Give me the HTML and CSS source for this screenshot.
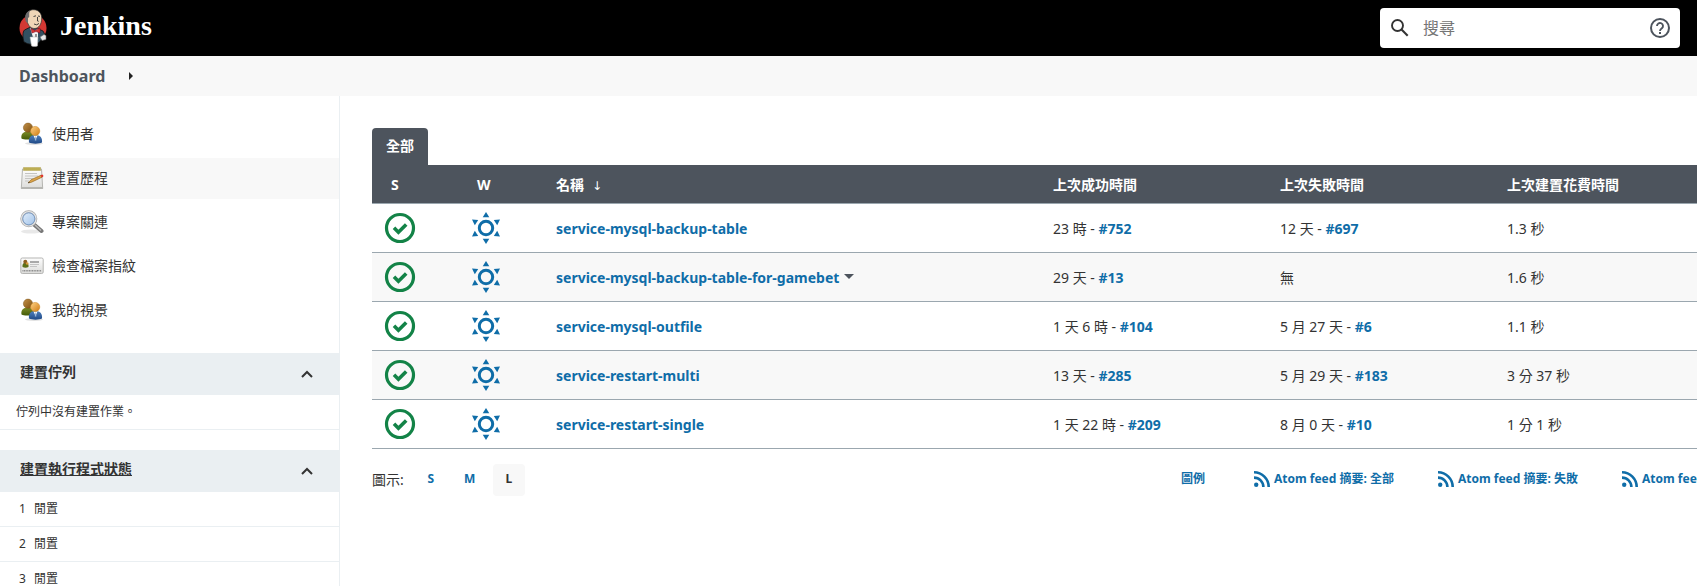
FILE: index.html
```html
<!DOCTYPE html>
<html lang="zh-Hant">
<head>
<meta charset="utf-8">
<title>Dashboard [Jenkins]</title>
<link rel="stylesheet" href="styles.css">
</head>
<body>
<svg class="defs" width="0" height="0" aria-hidden="true">
  <defs>
    <linearGradient id="gBrown" x1="0" y1="0" x2="1" y2="1"><stop offset="0" stop-color="#c39048"/><stop offset="1" stop-color="#7d4f10"/></linearGradient>
    <linearGradient id="gOrange" x1="0" y1="0" x2="1" y2="1"><stop offset="0" stop-color="#ffd489"/><stop offset="1" stop-color="#d07a10"/></linearGradient>
    <linearGradient id="gGreen" x1="0" y1="0" x2="0" y2="1"><stop offset="0" stop-color="#7d8c28"/><stop offset="1" stop-color="#435a06"/></linearGradient>
    <linearGradient id="gBlue" x1="0" y1="0" x2="0" y2="1"><stop offset="0" stop-color="#4f80bd"/><stop offset="1" stop-color="#204a87"/></linearGradient>
    <linearGradient id="gPaper" x1="0" y1="0" x2="0" y2="1"><stop offset="0" stop-color="#fdfdfd"/><stop offset="1" stop-color="#dcdcda"/></linearGradient>
    <linearGradient id="gLens" x1="0" y1="0" x2="1" y2="1"><stop offset="0" stop-color="#e6f1fc"/><stop offset="1" stop-color="#9dc0e8"/></linearGradient>
  </defs>
  <symbol id="people" viewBox="0 0 24 24">
    <ellipse cx="14" cy="21.500" rx="9" ry="1.500" fill="#000" opacity=".12"/>
    <path d="M1.500 16.500c-.8-4 1.500-7 6-7s6.500 2.500 6.500 6.500c-3 2-10 2-12.500.5z" fill="url(#gGreen)"/>
    <circle cx="8" cy="5.700" r="4.600" fill="url(#gBrown)" stroke="#7d5316" stroke-width=".5"/>
    <path d="M9 20.500c-.7-5 1.500-7.500 6.500-7.500s7 3 6.500 7.500c-3 1.500-10 1.500-13 0z" fill="url(#gBlue)"/>
    <path d="M13.500 13.500h4l-2 4.500z" fill="#fff"/><path d="M15.200 14.500h.8l.4 4h-1.600z" fill="#9db8d8"/>
    <circle cx="15.200" cy="9" r="4.600" fill="url(#gOrange)" stroke="#c9801c" stroke-width=".5"/>
  </symbol>
  <symbol id="notepad" viewBox="0 0 24 24">
    <path d="M2.500 3h19l1.200 19.500h-21.400z" fill="url(#gPaper)" stroke="#b4b4b0"/>
    <path d="M1.300 21h21.400v2h-21.400z" fill="#b5b5b1"/>
    <path d="M3.500 1.500h17v3h-17z" fill="#d2c368"/><path d="M4 1v4M6 1v4M8 1v4M10 1v4M12 1v4M14 1v4M16 1v4M18 1v4M20 1v4" stroke="#a3933a" stroke-width=".9"/>
    <path d="M5 7.500h12M5 10h13M5 12.500h8M5 15h4" stroke="#c4c4c2"/>
    <path d="M8 17l3-3.200 10-4.600 1 2-10.500 5z" fill="#dba44a" stroke="#8c5c13" stroke-width=".6"/>
    <path d="M20.500 9.300l1.600-.8q1.800.6 1.100 2.300l-1.600.8z" fill="#e2352d"/><path d="M8 17l1-1.200.8.9z" fill="#333"/>
  </symbol>
  <symbol id="lens" viewBox="0 0 24 24">
    <ellipse cx="11" cy="21.500" rx="10" ry="2" fill="#000" opacity=".09"/>
    <path d="M14 14.500l7.500 6.500" stroke="#777" stroke-width="4" stroke-linecap="round"/><path d="M15 15l6 5.500" stroke="#bbb" stroke-width="1.500"/>
    <circle cx="8.800" cy="8.800" r="7.200" fill="url(#gLens)" stroke="#aaa" stroke-width="2.600"/>
    <circle cx="8.800" cy="8.800" r="7.200" fill="none" stroke="#e4e4e4" stroke-width="1.200"/>
    <circle cx="8.800" cy="8.800" r="6" fill="none" stroke="#6e96c6" stroke-width=".8"/>
  </symbol>
  <symbol id="card" viewBox="0 0 24 24">
    <rect x=".8" y="4" width="22.400" height="15.500" rx="1.500" fill="url(#gPaper)" stroke="#b5b5b3"/>
    <path d="M2.500 13c-.5-3 1-4.500 3-4.500s3.500 1.500 3 4.500q-3 1.500-6 0z" fill="#5d7018"/><circle cx="5.300" cy="7.800" r="2" fill="#8c5f20"/>
    <circle cx="7.200" cy="9.500" r="1.300" fill="#d99a3c"/>
    <path d="M10 8h9" stroke="#777" stroke-width="1.200"/><path d="M10 10.500h9M10 12.500h7" stroke="#c4c4c4"/>
    <path d="M2.500 16.800h19" stroke="#888" stroke-width="1.600" stroke-dasharray="1 .6"/>
  </symbol>
  <symbol id="ok" viewBox="0 0 32 32">
    <circle cx="16" cy="16" r="13.500" fill="none" stroke="#138347" stroke-width="3.200"/>
    <path d="M10 15.800l4.400 4.400 7.800-7.800" fill="none" stroke="#138347" stroke-width="3.600"/>
  </symbol>
  <symbol id="sunny" viewBox="0 0 32 32">
    <circle cx="16" cy="16" r="6.700" fill="none" stroke="#0f6da8" stroke-width="3"/>
    <g fill="#0f6da8"><path d="M16 0l3.300 5.300h-6.600z"/><path d="M16 32l3.300-5.300h-6.600z"/><path d="M2 7.500l6.200.4-3.400 5.300z"/><path d="M30 7.500l-6.200.4 3.400 5.300z"/><path d="M2 24.500l6.200-.4-3.400-5.300z"/><path d="M30 24.500l-6.200-.4 3.400-5.300z"/></g>
  </symbol>
  <symbol id="rss" viewBox="0 0 16 16">
    <circle cx="2.200" cy="13.800" r="2.200" fill="#0f6da8"/>
    <path d="M0 6.600a9.400 9.400 0 0 1 9.400 9.400M0 1.300a14.700 14.700 0 0 1 14.700 14.700" fill="none" stroke="#0f6da8" stroke-width="2.600"/>
  </symbol>
  <symbol id="up" viewBox="0 0 12 8"><path d="M1 7l5-5 5 5" fill="none" stroke="#333" stroke-width="2"/></symbol>
</svg>

<header class="header">
  <a class="brand" href="#">
    <svg class="logo" viewBox="0 0 28 38" aria-hidden="true">
      <circle cx="14" cy="19" r="13.500" fill="#d33833"/>
      <path d="M5 33c-1.500-5-1.500-10 .5-12l5-2.500 8 1 5.500 2.500q3 4 2 8l-4 1-2 2.500q-8 4-15-.5z" fill="#335061" stroke="#111" stroke-width=".8"/>
      <path d="M11 18.500l4 4 4-3v9h-5z" fill="#f4f4f4"/>
      <path d="M6.500 8C7 3 11 .5 15 .7c5 .3 8 4 7.700 9.300-.2 5-2.700 9-6.700 9.500-4 0-6-2-7.500-6z" fill="#f0d6b7" stroke="#333" stroke-width=".7"/>
      <path d="M11 1.600C7 3 5.700 7 6.500 12q1 2 2.500 2V9l1.200-1V4z" fill="#6d6b6d"/>
      <path d="M14.500 7.500l2.500-.7M19 7l2 .4M18.500 8v4l1.200.3M15 15q3 2 5-.6" fill="none" stroke="#333" stroke-width=".9"/>
      <path d="M12 19.500l4 2 5-2.500v5l-4-1.500-4 1.500z" fill="#d33833" stroke="#81001f" stroke-width=".5"/>
      <path d="M17 25v3" stroke="#333"/>
      <path d="M11 28h8l-.5 9q-3 1-6 0z" fill="#fff" stroke="#aaa" stroke-width=".5"/>
      <path d="M21 28l4-2.500 2 1v4l-4 1z" fill="#e8e8e8" stroke="#666" stroke-width=".6"/>
    </svg>
    <span class="brand-name">Jenkins</span>
  </a>
  <form class="search" role="search">
    <svg class="search-icon" viewBox="0 0 18 18" aria-hidden="true"><circle cx="6.500" cy="6.500" r="5.500" fill="none" stroke="#333" stroke-width="1.900"/><path d="M10.500 10.500l6.200 6.200" stroke="#333" stroke-width="2.100"/></svg>
    <input class="search-box" type="text" placeholder="搜尋" aria-label="搜尋">
    <a class="help" href="#" aria-label="說明"><svg viewBox="0 0 20 20"><circle cx="10" cy="10" r="9" fill="none" stroke="#4d545d" stroke-width="2"/><path d="M7 8a3 3 0 1 1 4.900 2.300c-1.200.9-1.900 1.400-1.900 2.700" fill="none" stroke="#4d545d" stroke-width="1.900"/><path d="M9 14h2v2h-2z" fill="#4d545d"/></svg></a>
  </form>
</header>

<nav class="crumbs">
  <a class="crumb" href="#">Dashboard</a>
  <svg class="crumb-arrow" viewBox="0 0 4 8" aria-hidden="true"><path d="M0 0l4 4-4 4z" fill="#222"/></svg>
</nav>

<div class="page">
  <aside class="side">
    <nav class="tasks">
      <a class="task" href="#"><svg class="task-icon"><use href="#people"/></svg>使用者</a>
      <a class="task task-active" href="#"><svg class="task-icon"><use href="#notepad"/></svg>建置歷程</a>
      <a class="task" href="#"><svg class="task-icon"><use href="#lens"/></svg>專案關連</a>
      <a class="task" href="#"><svg class="task-icon"><use href="#card"/></svg>檢查檔案指紋</a>
      <a class="task" href="#"><svg class="task-icon"><use href="#people"/></svg>我的視景</a>
    </nav>
    <section class="pane">
      <div class="pane-head"><span>建置佇列</span><button class="fold" type="button" aria-label="收合建置佇列"><svg class="fold-icon"><use href="#up"/></svg></button></div>
      <div class="pane-row pane-empty">佇列中沒有建置作業。</div>
    </section>
    <section class="pane">
      <div class="pane-head"><a href="#">建置執行程式狀態</a><button class="fold" type="button" aria-label="收合建置執行程式狀態"><svg class="fold-icon"><use href="#up"/></svg></button></div>
      <div class="pane-row"><span class="num">1</span>閒置</div>
      <div class="pane-row"><span class="num">2</span>閒置</div>
      <div class="pane-row"><span class="num">3</span>閒置</div>
    </section>
  </aside>

  <main class="main">
    <div class="tabs"><a class="tab" href="#">全部</a></div>
    <table class="jobs">
      <colgroup><col class="col-s"><col class="col-w"><col><col class="col-time"><col class="col-time"><col class="col-last"></colgroup>
      <thead>
        <tr><th class="th-icon">S</th><th class="th-icon">W</th><th>名稱<span class="sort">↓</span></th><th>上次成功時間</th><th>上次失敗時間</th><th>上次建置花費時間</th></tr>
      </thead>
      <tbody>
        <tr><td class="cell-s"><svg class="status"><use href="#ok"/></svg></td><td class="cell-w"><svg class="status"><use href="#sunny"/></svg></td><td><a href="#">service-mysql-backup-table</a></td><td>23 時 - <a href="#">#752</a></td><td>12 天 - <a href="#">#697</a></td><td>1.3 秒</td></tr>
        <tr><td class="cell-s"><svg class="status"><use href="#ok"/></svg></td><td class="cell-w"><svg class="status"><use href="#sunny"/></svg></td><td><a href="#">service-mysql-backup-table-for-gamebet</a><button class="menu" type="button" aria-label="選單"></button></td><td>29 天 - <a href="#">#13</a></td><td>無</td><td>1.6 秒</td></tr>
        <tr><td class="cell-s"><svg class="status"><use href="#ok"/></svg></td><td class="cell-w"><svg class="status"><use href="#sunny"/></svg></td><td><a href="#">service-mysql-outfile</a></td><td>1 天 6 時 - <a href="#">#104</a></td><td>5 月 27 天 - <a href="#">#6</a></td><td>1.1 秒</td></tr>
        <tr><td class="cell-s"><svg class="status"><use href="#ok"/></svg></td><td class="cell-w"><svg class="status"><use href="#sunny"/></svg></td><td><a href="#">service-restart-multi</a></td><td>13 天 - <a href="#">#285</a></td><td>5 月 29 天 - <a href="#">#183</a></td><td>3 分 37 秒</td></tr>
        <tr><td class="cell-s"><svg class="status"><use href="#ok"/></svg></td><td class="cell-w"><svg class="status"><use href="#sunny"/></svg></td><td><a href="#">service-restart-single</a></td><td>1 天 22 時 - <a href="#">#209</a></td><td>8 月 0 天 - <a href="#">#10</a></td><td>1 分 1 秒</td></tr>
      </tbody>
    </table>
    <div class="footer">
      <div class="sizes"><span class="sizes-label">圖示:</span><a class="size" href="#">S</a><a class="size" href="#">M</a><span class="size size-on">L</span></div>
      <div class="feeds">
        <a class="legend" href="#">圖例</a>
        <a class="feed" href="#"><svg class="feed-icon"><use href="#rss"/></svg>Atom feed 摘要: 全部</a>
        <a class="feed" href="#"><svg class="feed-icon"><use href="#rss"/></svg>Atom feed 摘要: 失敗</a>
        <a class="feed feed-last" href="#"><svg class="feed-icon"><use href="#rss"/></svg>Atom feed</a>
      </div>
    </div>
  </main>
</div>
</body>
</html>
```

FILE: styles.css
```css
* { box-sizing: border-box; }
body {
  margin: 0;
  height: 100vh;
  display: flex;
  flex-direction: column;
  overflow: hidden;
  background: #fff;
  color: #333;
  font: 14px/20px "Noto Sans", "Noto Sans CJK TC", sans-serif;
}
a { color: #0f6da8; text-decoration: none; }
button { border: 0; padding: 0; background: none; }
.defs { position: absolute; }

.header {
  flex: none;
  height: 56px;
  padding: 0 17px 0 19px;
  display: flex;
  align-items: center;
  justify-content: space-between;
  background: #000;
}
.brand { display: flex; align-items: center; gap: 13px; color: #fff; }
.logo { width: 28px; height: 38px; }
.brand-name { padding-bottom: 4px; font: bold 28px/32px "Liberation Serif", serif; }
.search {
  width: 300px;
  height: 40px;
  padding: 0 10px 0 11px;
  display: flex;
  align-items: center;
  background: #fff;
  border-radius: 4px;
}
.search-icon { width: 18px; height: 18px; }
.search-box {
  flex: 1;
  min-width: 0;
  border: 0;
  padding: 0 14px;
  font: inherit;
  font-size: 16px;
  background: none;
}
.search-box::placeholder { color: #757575; }
.help { display: flex; width: 20px; height: 20px; }

.crumbs {
  flex: none;
  height: 40px;
  padding-left: 19px;
  display: flex;
  align-items: center;
  gap: 24px;
  background: #f8f8f8;
}
.crumb { color: #4d545d; font-size: 16px; font-weight: bold; }
.crumb-arrow { width: 4px; height: 8px; }

.page { flex: 1; min-height: 0; display: flex; }
.side {
  flex: none;
  width: 340px;
  padding-top: 18px;
  border-right: 1px solid #eaeff2;
  overflow: hidden;
}
.tasks { display: flex; flex-direction: column; gap: 3px; margin-bottom: 22px; }
.task {
  height: 41px;
  padding: 0 0 2px 20px;
  display: flex;
  align-items: center;
  gap: 8px;
  color: #333;
}
.task-active { background: #f8f8f8; }
.task-icon { width: 24px; height: 24px; }
.pane { margin-bottom: 20px; font-size: 12px; }
.pane-head {
  height: 42px;
  padding: 0 26px 4px 20px;
  display: flex;
  align-items: center;
  justify-content: space-between;
  background: #eaeff2;
  font-size: 14px;
  font-weight: bold;
}
.pane-head a { color: inherit; text-decoration: underline; }
.fold { display: flex; padding-top: 4px; }
.fold-icon { width: 12px; height: 8px; }
.pane-row {
  height: 35px;
  padding-left: 19px;
  display: flex;
  align-items: center;
  gap: 8px;
  border-bottom: 1px solid #eaeff2;
}
.pane-empty { padding-left: 16px; }
.num { width: 7px; }

.main { flex: 1; min-width: 0; padding: 32px 0 0 32px; overflow: hidden; }
.tabs { display: flex; }
.tab {
  height: 37px;
  padding: 8px 14px;
  border-radius: 4px 4px 0 0;
  background: #4d545d;
  color: #fff;
  font-weight: bold;
}
.jobs {
  width: 100%;
  table-layout: fixed;
  border-collapse: separate;
  border-spacing: 0;
  white-space: nowrap;
}
.col-s { width: 86px; }
.col-w { width: 84px; }
.col-time { width: 227px; }
.col-last { width: 204px; }
.jobs th {
  height: 39px;
  padding: 1px 14px 0;
  background: #4d545d;
  border-bottom: 1px solid #9ba7af;
  color: #fff;
  font-weight: bold;
  text-align: left;
}
.jobs .th-icon { padding-left: 19px; }
.jobs td { height: 49px; padding: 2px 14px 0; border-bottom: 1px solid #9ba7af; }
.jobs tbody tr:nth-child(even) { background: #f8f8f8; }
.jobs td a { font-weight: bold; }
.jobs .cell-s { padding: 0 0 0 12px; }
.jobs .cell-w { padding: 0 0 0 12px; }
.status { display: block; width: 32px; height: 32px; }
.sort { margin-left: 8px; font: 12px "DejaVu Sans", sans-serif; }
.menu {
  width: 0;
  height: 0;
  margin-left: 5px;
  vertical-align: 4px;
  border: 5px solid transparent;
  border-top-color: #4d545d;
  border-bottom: 0;
}

.footer { display: flex; justify-content: space-between; padding-top: 15px; white-space: nowrap; }
.sizes { display: flex; align-items: center; }
.sizes-label { margin-right: 11px; }
.size {
  width: 32px;
  height: 32px;
  margin-right: 7px;
  border-radius: 4px;
  font-size: 12px;
  font-weight: bold;
  line-height: 30px;
  text-align: center;
}
.size-on { background: #f8f8f8; }
.feeds {
  display: flex;
  align-items: center;
  gap: 44px;
  padding-bottom: 2px;
  font-size: 12px;
  font-weight: bold;
}
.legend { margin-right: 5px; }
.feed { display: flex; align-items: center; gap: 4px; }
.feed-last { width: 75px; }
.feed-icon { flex: none; width: 16px; height: 16px; }
```
